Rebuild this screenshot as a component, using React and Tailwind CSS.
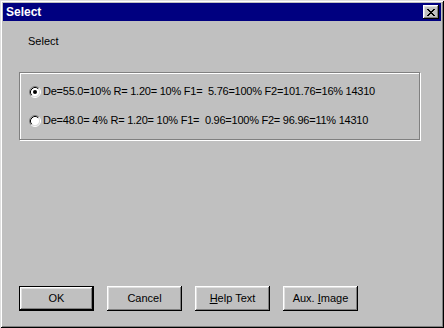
const raised =
  "shadow-[inset_-1px_-1px_#000,inset_1px_1px_#fff,inset_-2px_-2px_#808080,inset_2px_2px_#dfdfdf]";

function Radio({ checked }) {
  return (
    <svg width="12" height="12" viewBox="0 0 12 12" className="shrink-0">
      <circle cx="6" cy="6" r="4.5" fill="#fff" />
      <path d="M2.11 9.89 A5.5 5.5 0 0 1 9.89 2.11" stroke="#808080" fill="none" />
      <path d="M9.89 2.11 A5.5 5.5 0 0 1 2.11 9.89" stroke="#fff" fill="none" />
      <path d="M2.82 9.18 A4.5 4.5 0 0 1 9.18 2.82" stroke="#000" fill="none" />
      <path d="M9.18 2.82 A4.5 4.5 0 0 1 2.82 9.18" stroke="#dfdfdf" fill="none" />
      {checked && <circle cx="6" cy="6" r="2" fill="#000" />}
    </svg>
  );
}

function Button({ children, isDefault }) {
  return (
    <div
      className={`w-[75px] h-[25px] flex items-center justify-center ${
        isDefault ? "border border-black" : ""
      }`}
    >
      <div className={`w-full h-full flex items-center justify-center ${raised}`}>
        <span className="leading-[13px]">{children}</span>
      </div>
    </div>
  );
}

const options = [
  { text: "De=55.0=10% R= 1.20= 10% F1=  5.76=100% F2=101.76=16% 14310", checked: true },
  { text: "De=48.0= 4% R= 1.20= 10% F1=  0.96=100% F2= 96.96=11% 14310", checked: false },
];

export default function App() {
  return (
    <div
      className="w-[444px] h-[328px] bg-[#c0c0c0] p-[3px] flex flex-col text-black text-[11px] shadow-[inset_1px_1px_#dfdfdf,inset_-1px_-1px_#000,inset_2px_2px_#fff,inset_-2px_-2px_#808080]"
      style={{ fontFamily: '"Liberation Sans", Arial, sans-serif' }}
    >
      {/* title bar */}
      <div className="h-[18px] bg-[#000080] flex items-center justify-between pl-[3px] pr-[2px]">
        <span className="text-white font-bold text-[12px] leading-[14px]">Select</span>
        <div className={`w-[16px] h-[14px] bg-[#c0c0c0] flex items-center justify-center ${raised}`}>
          <svg width="8" height="7" viewBox="0 0 8 7" shapeRendering="crispEdges">
            <path d="M0 0h2v1h-2zM6 0h2v1h-2zM1 1h2v1h-2zM5 1h2v1h-2zM2 2h4v1h-4zM3 3h2v1h-2zM2 4h4v1h-4zM1 5h2v1h-2zM5 5h2v1h-2zM0 6h2v1h-2zM6 6h2v1h-2z" fill="#000" />
          </svg>
        </div>
      </div>

      <div className="flex-1 flex flex-col px-[16px]">
        <div className="mt-[14px] ml-[9px] h-[13px] leading-[13px]">Select</div>

        <div className="mt-[24px] w-[401px] h-[68px] border border-[#808080] shadow-[1px_1px_0_#fff,inset_1px_1px_0_#fff] pt-[12px] pl-[9px] flex flex-col gap-[16px]">
          {options.map((o, i) => (
            <div key={i} className="flex items-center gap-[2px] h-[13px]">
              <Radio checked={o.checked} />
              <span className="whitespace-pre leading-[13px] tracking-[-0.24px]">{o.text}</span>
            </div>
          ))}
        </div>

        <div className="mt-auto mb-[14px] flex gap-[13px]">
          <Button isDefault>OK</Button>
          <Button>Cancel</Button>
          <Button>
            <span className="underline">H</span>elp Text
          </Button>
          <Button>
            Aux. <span className="underline">I</span>mage
          </Button>
        </div>
      </div>
    </div>
  );
}
